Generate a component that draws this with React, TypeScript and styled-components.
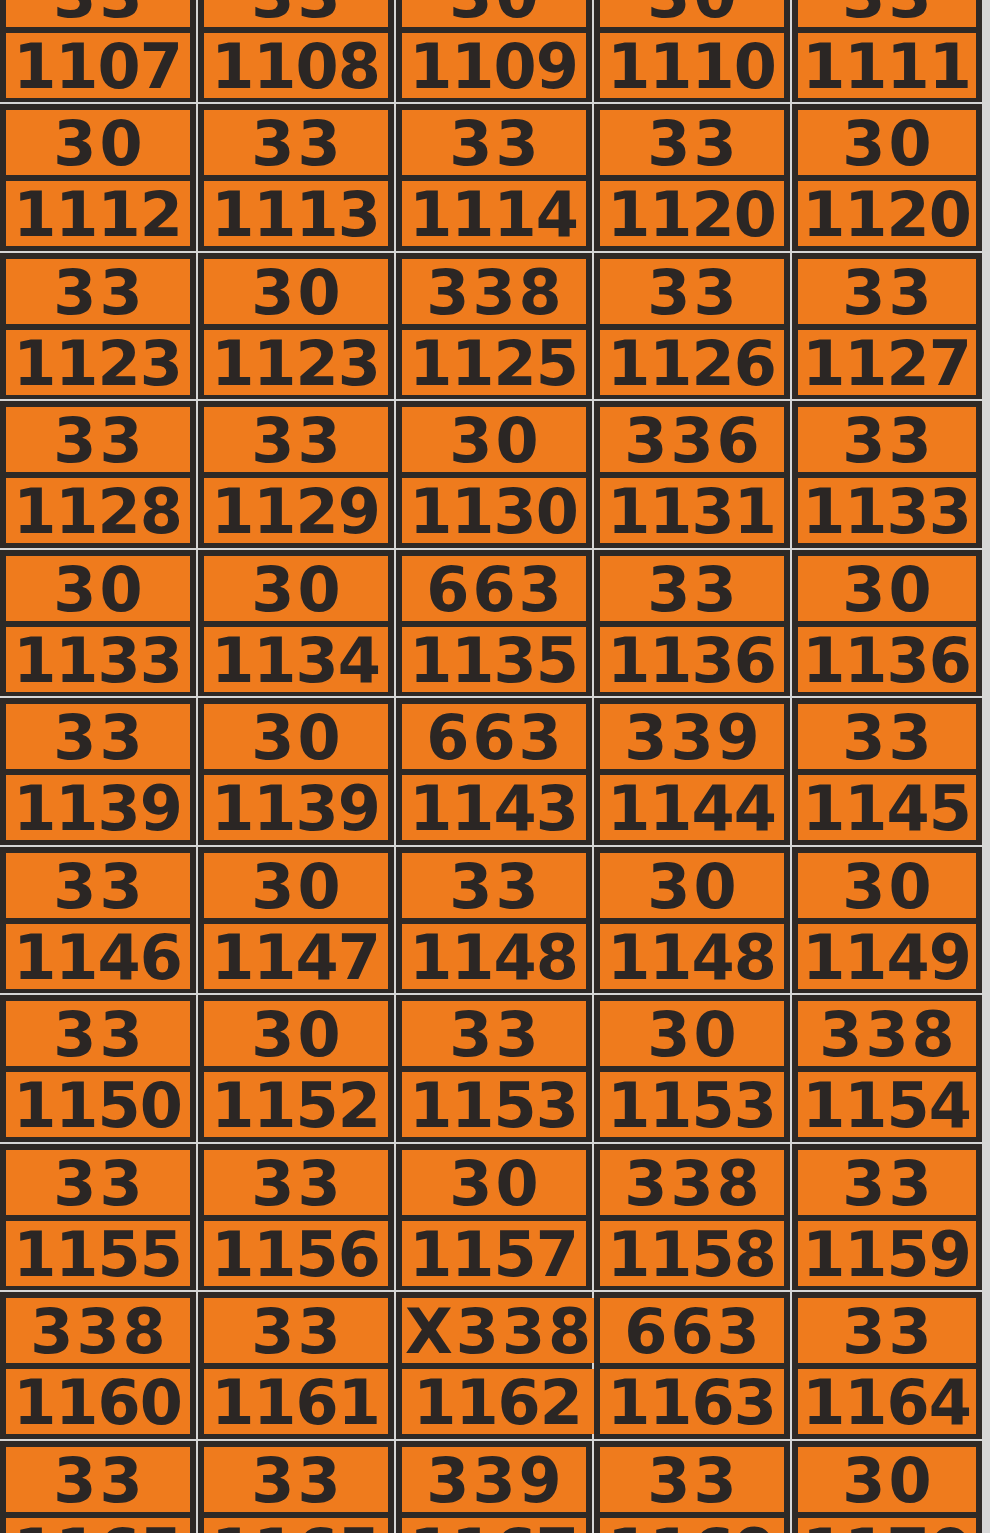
import * as React from "react";
import styled, { createGlobalStyle } from "styled-components";

const rows: [string[], string[]][] = [
  [["33", "33", "30", "30", "33"], ["1107", "1108", "1109", "1110", "1111"]],
  [["30", "33", "33", "33", "30"], ["1112", "1113", "1114", "1120", "1120"]],
  [["33", "30", "338", "33", "33"], ["1123", "1123", "1125", "1126", "1127"]],
  [["33", "33", "30", "336", "33"], ["1128", "1129", "1130", "1131", "1133"]],
  [["30", "30", "663", "33", "30"], ["1133", "1134", "1135", "1136", "1136"]],
  [["33", "30", "663", "339", "33"], ["1139", "1139", "1143", "1144", "1145"]],
  [["33", "30", "33", "30", "30"], ["1146", "1147", "1148", "1148", "1149"]],
  [["33", "30", "33", "30", "338"], ["1150", "1152", "1153", "1153", "1154"]],
  [["33", "33", "30", "338", "33"], ["1155", "1156", "1157", "1158", "1159"]],
  [["338", "33", "X338", "663", "33"], ["1160", "1161", "1162", "1163", "1164"]],
  [["33", "33", "339", "33", "30"], ["1165", "1165", "1167", "1169", "1170"]],
];

const GlobalStyle = createGlobalStyle`
  html, body {
    margin: 0;
    padding: 0;
    background: #d6d6d6;
  }
  body {
    height: 1533px;
    overflow: hidden;
    font-family: "DejaVu Sans", "Liberation Sans", sans-serif;
  }
`;

function App() {
  const plates = rows.flatMap(([hazard, un], r) =>
    hazard.map((h, c) => ({ key: `${r}-${c}`, hazard: h, un: un[c] }))
  );

  return (
    <>
      <GlobalStyle />
      <Sheet>
        {plates.map((p) => (
          <Plate key={p.key}>
            <Field $top>{p.hazard}</Field>
            <Field>{p.un}</Field>
          </Plate>
        ))}
      </Sheet>
    </>
  );
}
export default App;

const Sheet = styled.div`
  display: grid;
  grid-template-columns: repeat(4, 196px) 190px;
  grid-auto-rows: 146.5px;
  gap: 2px;
  margin-top: -44.5px;
  width: 990px;
  background: #d6d6d6;
`;

const Plate = styled.div`
  box-sizing: border-box;
  display: grid;
  grid-template-rows: 1fr 1fr;
  gap: 6px;
  padding: 6px;
  background: #2e2926;
`;

const Field = styled.div<{ $top?: boolean }>`
  display: flex;
  align-items: center;
  justify-content: center;
  overflow: visible;
  white-space: nowrap;
  background: #ef7b1d;
  color: #2b2624;
  font-family: "DejaVu Sans", "Liberation Sans", sans-serif;
  font-weight: 700;
  font-size: 62px;
  line-height: 1;
  padding-top: 3px;
  letter-spacing: ${(p) => (p.$top ? "3px" : "-1px")};
  text-indent: ${(p) => (p.$top ? "3px" : "-1px")};
`;
